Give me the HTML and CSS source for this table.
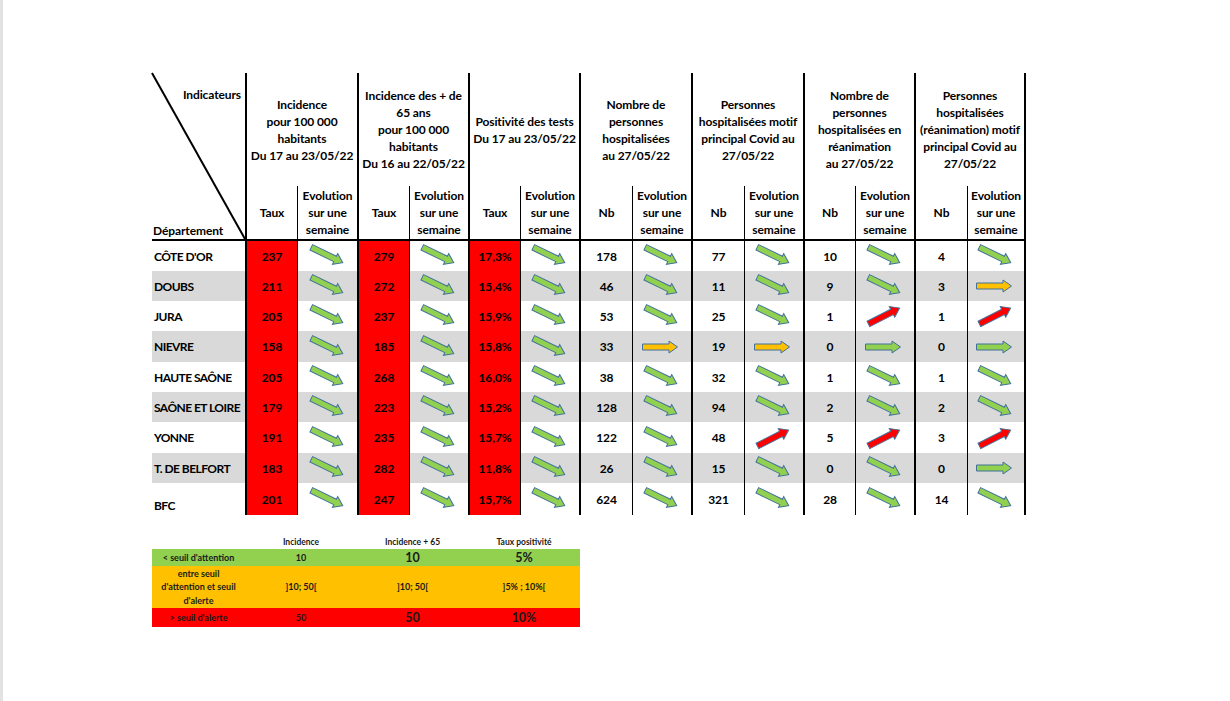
FILE: index.html
```html
<!DOCTYPE html>
<html lang="fr">
<head>
<meta charset="utf-8">
<title>Indicateurs COVID BFC</title>
<link rel="stylesheet" href="styles.css">
</head>
<body>
<svg class="defs" width="0" height="0" aria-hidden="true">
  <defs>
    <polygon id="ar" points="-17.5,-3 9,-3 9,-6 17.5,0 9,6 9,3 -17.5,3"/>
  </defs>
</svg>
<main class="page">
  <div class="grid">
    <div class="c hd dept">
      <svg class="diag" viewBox="0 0 93 166" preserveAspectRatio="none"><line x1="0" y1="0" x2="93" y2="166"/></svg>
      <span class="ind">Indicateurs</span>
      <span class="dep">Département</span>
    </div>
    <div class="c hd gt">Incidence<br>pour 100 000<br>habitants<br>Du 17 au 23/05/22</div>
    <div class="c hd gt">Incidence des + de<br>65 ans<br>pour 100 000<br>habitants<br>Du 16 au 22/05/22</div>
    <div class="c hd gt">Positivité des tests<br>Du 17 au 23/05/22</div>
    <div class="c hd gt">Nombre de<br>personnes<br>hospitalisées<br>au 27/05/22</div>
    <div class="c hd gt">Personnes<br>hospitalisées motif<br>principal Covid au<br>27/05/22</div>
    <div class="c hd gt">Nombre de<br>personnes<br>hospitalisées en<br>réanimation<br>au 27/05/22</div>
    <div class="c hd gt last">Personnes<br>hospitalisées<br>(réanimation) motif<br>principal Covid au<br>27/05/22</div>

    <div class="c sh k">Taux</div><div class="c sh e">Evolution<br>sur une<br>semaine</div>
    <div class="c sh k">Taux</div><div class="c sh e">Evolution<br>sur une<br>semaine</div>
    <div class="c sh k">Taux</div><div class="c sh e">Evolution<br>sur une<br>semaine</div>
    <div class="c sh k">Nb</div><div class="c sh e">Evolution<br>sur une<br>semaine</div>
    <div class="c sh k">Nb</div><div class="c sh e">Evolution<br>sur une<br>semaine</div>
    <div class="c sh k">Nb</div><div class="c sh e">Evolution<br>sur une<br>semaine</div>
    <div class="c sh k">Nb</div><div class="c sh e last">Evolution<br>sur une<br>semaine</div>

    <div class="row">
      <div class="c nm">CÔTE D'OR</div>
      <div class="c k red">237</div><div class="c e"><svg class="arr"><use href="#ar" class="dn"/></svg></div>
      <div class="c k red">279</div><div class="c e"><svg class="arr"><use href="#ar" class="dn"/></svg></div>
      <div class="c k red">17,3%</div><div class="c e"><svg class="arr"><use href="#ar" class="dn"/></svg></div>
      <div class="c k">178</div><div class="c e"><svg class="arr"><use href="#ar" class="dn"/></svg></div>
      <div class="c k">77</div><div class="c e"><svg class="arr"><use href="#ar" class="dn"/></svg></div>
      <div class="c k">10</div><div class="c e"><svg class="arr"><use href="#ar" class="dn"/></svg></div>
      <div class="c k">4</div><div class="c e last"><svg class="arr"><use href="#ar" class="dn"/></svg></div>
    </div>
    <div class="row gray">
      <div class="c nm">DOUBS</div>
      <div class="c k red">211</div><div class="c e"><svg class="arr"><use href="#ar" class="dn"/></svg></div>
      <div class="c k red">272</div><div class="c e"><svg class="arr"><use href="#ar" class="dn"/></svg></div>
      <div class="c k red">15,4%</div><div class="c e"><svg class="arr"><use href="#ar" class="dn"/></svg></div>
      <div class="c k">46</div><div class="c e"><svg class="arr"><use href="#ar" class="dn"/></svg></div>
      <div class="c k">11</div><div class="c e"><svg class="arr"><use href="#ar" class="dn"/></svg></div>
      <div class="c k">9</div><div class="c e"><svg class="arr"><use href="#ar" class="dn"/></svg></div>
      <div class="c k">3</div><div class="c e last"><svg class="arr"><use href="#ar" class="fy"/></svg></div>
    </div>
    <div class="row">
      <div class="c nm">JURA</div>
      <div class="c k red">205</div><div class="c e"><svg class="arr"><use href="#ar" class="dn"/></svg></div>
      <div class="c k red">237</div><div class="c e"><svg class="arr"><use href="#ar" class="dn"/></svg></div>
      <div class="c k red">15,9%</div><div class="c e"><svg class="arr"><use href="#ar" class="dn"/></svg></div>
      <div class="c k">53</div><div class="c e"><svg class="arr"><use href="#ar" class="dn"/></svg></div>
      <div class="c k">25</div><div class="c e"><svg class="arr"><use href="#ar" class="dn"/></svg></div>
      <div class="c k">1</div><div class="c e"><svg class="arr"><use href="#ar" class="up"/></svg></div>
      <div class="c k">1</div><div class="c e last"><svg class="arr"><use href="#ar" class="up"/></svg></div>
    </div>
    <div class="row gray">
      <div class="c nm">NIEVRE</div>
      <div class="c k red">158</div><div class="c e"><svg class="arr"><use href="#ar" class="dn"/></svg></div>
      <div class="c k red">185</div><div class="c e"><svg class="arr"><use href="#ar" class="dn"/></svg></div>
      <div class="c k red">15,8%</div><div class="c e"><svg class="arr"><use href="#ar" class="dn"/></svg></div>
      <div class="c k">33</div><div class="c e"><svg class="arr"><use href="#ar" class="fy"/></svg></div>
      <div class="c k">19</div><div class="c e"><svg class="arr"><use href="#ar" class="fy"/></svg></div>
      <div class="c k">0</div><div class="c e"><svg class="arr"><use href="#ar" class="fg"/></svg></div>
      <div class="c k">0</div><div class="c e last"><svg class="arr"><use href="#ar" class="fg"/></svg></div>
    </div>
    <div class="row">
      <div class="c nm">HAUTE SAÔNE</div>
      <div class="c k red">205</div><div class="c e"><svg class="arr"><use href="#ar" class="dn"/></svg></div>
      <div class="c k red">268</div><div class="c e"><svg class="arr"><use href="#ar" class="dn"/></svg></div>
      <div class="c k red">16,0%</div><div class="c e"><svg class="arr"><use href="#ar" class="dn"/></svg></div>
      <div class="c k">38</div><div class="c e"><svg class="arr"><use href="#ar" class="dn"/></svg></div>
      <div class="c k">32</div><div class="c e"><svg class="arr"><use href="#ar" class="dn"/></svg></div>
      <div class="c k">1</div><div class="c e"><svg class="arr"><use href="#ar" class="dn"/></svg></div>
      <div class="c k">1</div><div class="c e last"><svg class="arr"><use href="#ar" class="dn"/></svg></div>
    </div>
    <div class="row gray">
      <div class="c nm">SAÔNE ET LOIRE</div>
      <div class="c k red">179</div><div class="c e"><svg class="arr"><use href="#ar" class="dn"/></svg></div>
      <div class="c k red">223</div><div class="c e"><svg class="arr"><use href="#ar" class="dn"/></svg></div>
      <div class="c k red">15,2%</div><div class="c e"><svg class="arr"><use href="#ar" class="dn"/></svg></div>
      <div class="c k">128</div><div class="c e"><svg class="arr"><use href="#ar" class="dn"/></svg></div>
      <div class="c k">94</div><div class="c e"><svg class="arr"><use href="#ar" class="dn"/></svg></div>
      <div class="c k">2</div><div class="c e"><svg class="arr"><use href="#ar" class="dn"/></svg></div>
      <div class="c k">2</div><div class="c e last"><svg class="arr"><use href="#ar" class="dn"/></svg></div>
    </div>
    <div class="row">
      <div class="c nm">YONNE</div>
      <div class="c k red">191</div><div class="c e"><svg class="arr"><use href="#ar" class="dn"/></svg></div>
      <div class="c k red">235</div><div class="c e"><svg class="arr"><use href="#ar" class="dn"/></svg></div>
      <div class="c k red">15,7%</div><div class="c e"><svg class="arr"><use href="#ar" class="dn"/></svg></div>
      <div class="c k">122</div><div class="c e"><svg class="arr"><use href="#ar" class="dn"/></svg></div>
      <div class="c k">48</div><div class="c e"><svg class="arr"><use href="#ar" class="up"/></svg></div>
      <div class="c k">5</div><div class="c e"><svg class="arr"><use href="#ar" class="up"/></svg></div>
      <div class="c k">3</div><div class="c e last"><svg class="arr"><use href="#ar" class="up"/></svg></div>
    </div>
    <div class="row gray">
      <div class="c nm">T. DE BELFORT</div>
      <div class="c k red">183</div><div class="c e"><svg class="arr"><use href="#ar" class="dn"/></svg></div>
      <div class="c k red">282</div><div class="c e"><svg class="arr"><use href="#ar" class="dn"/></svg></div>
      <div class="c k red">11,8%</div><div class="c e"><svg class="arr"><use href="#ar" class="dn"/></svg></div>
      <div class="c k">26</div><div class="c e"><svg class="arr"><use href="#ar" class="dn"/></svg></div>
      <div class="c k">15</div><div class="c e"><svg class="arr"><use href="#ar" class="dn"/></svg></div>
      <div class="c k">0</div><div class="c e"><svg class="arr"><use href="#ar" class="dn"/></svg></div>
      <div class="c k">0</div><div class="c e last"><svg class="arr"><use href="#ar" class="fg"/></svg></div>
    </div>
    <div class="row total">
      <div class="c nm">BFC</div>
      <div class="c k red">201</div><div class="c e"><svg class="arr"><use href="#ar" class="dn"/></svg></div>
      <div class="c k red">247</div><div class="c e"><svg class="arr"><use href="#ar" class="dn"/></svg></div>
      <div class="c k red">15,7%</div><div class="c e"><svg class="arr"><use href="#ar" class="dn"/></svg></div>
      <div class="c k">624</div><div class="c e"><svg class="arr"><use href="#ar" class="dn"/></svg></div>
      <div class="c k">321</div><div class="c e"><svg class="arr"><use href="#ar" class="dn"/></svg></div>
      <div class="c k">28</div><div class="c e"><svg class="arr"><use href="#ar" class="dn"/></svg></div>
      <div class="c k">14</div><div class="c e last"><svg class="arr"><use href="#ar" class="dn"/></svg></div>
    </div>
  </div>

  <div class="legend">
    <div class="lh"></div>
    <div class="lh">Incidence</div>
    <div class="lh">Incidence + 65</div>
    <div class="lh">Taux positivité</div>

    <div class="lrow lgreen">
      <div class="lc">&lt; seuil d'attention</div>
      <div class="lc">10</div>
      <div class="lc big">10</div>
      <div class="lc big">5%</div>
    </div>
    <div class="lrow lyellow">
      <div class="lc">entre seuil<br>d'attention et seuil<br>d'alerte</div>
      <div class="lc">]10; 50[</div>
      <div class="lc">]10; 50[</div>
      <div class="lc">]5% ; 10%[</div>
    </div>
    <div class="lrow lred">
      <div class="lc">&gt; seuil d'alerte</div>
      <div class="lc">50</div>
      <div class="lc big">50</div>
      <div class="lc big">10%</div>
    </div>
  </div>
</main>
</body>
</html>
```

FILE: styles.css
```css
* { box-sizing: border-box; }

html, body {
  margin: 0;
  padding: 0;
  background: #fff;
}

body {
  border-left: 3px solid #e2e2e2;
  min-height: 701px;
  font-family: "Lato", "Liberation Sans", sans-serif;
  font-weight: 700;
  color: #000;
}

.defs {
  position: absolute;
  width: 0;
  height: 0;
}

.page {
  padding: 73px 0 0 149px;
}

.grid {
  display: grid;
  width: 876px;
  grid-template-columns: 93px 52px 60px 52px 59px 52px 59px 53px 59px 53px 59px 52px 59px 53px 59px;
  grid-template-rows: 113px 55px 30px 30px 30px 31px 30px 30px 31px 30px 32px;
  font-size: 12px;
  letter-spacing: -0.1px;
}

.row { display: contents; }

.c {
  display: flex;
  align-items: center;
  justify-content: center;
  text-align: center;
  white-space: nowrap;
  line-height: 17px;
}

.hd.dept {
  grid-row: 1 / span 2;
  grid-column: 1;
  position: relative;
  border-bottom: 2px solid #000;
  display: block;
}

.diag {
  position: absolute;
  left: 0;
  top: 0;
  width: 100%;
  height: 100%;
  overflow: visible;
}
.diag line {
  stroke: #000;
  stroke-width: 2;
  vector-effect: non-scaling-stroke;
}

.ind {
  position: absolute;
  right: 4px;
  top: 13px;
}
.dep {
  position: absolute;
  left: 1px;
  bottom: 0;
}

.gt {
  grid-column: span 2;
  border-left: 2px solid #000;
}

.sh {
  border-bottom: 2px solid #000;
}

.k { border-left: 2px solid #000; }
.e { border-left: 1px solid #000; }
.last { border-right: 2px solid #000; }

.nm {
  justify-content: flex-start;
  padding-left: 2px;
  letter-spacing: -0.55px;
}

.gray > .c { background: #d9d9d9; }
.row > .red { background: #ff0000; }

.total > .nm {
  align-items: flex-end;
  padding-bottom: 1px;
}

.arr {
  width: 60px;
  height: 30px;
  overflow: visible;
}
.arr use {
  stroke: #41719c;
  stroke-width: 1;
  stroke-linejoin: miter;
}
.arr .dn { fill: #92d050; transform: translate(29px, 14px) rotate(26deg); }
.arr .up { fill: #ff0000; transform: translate(29px, 15px) rotate(-27deg); }
.arr .fy { fill: #ffc000; transform: translate(28px, 15px); }
.arr .fg { fill: #92d050; transform: translate(28px, 15px); }

/* legend */
.legend {
  margin-top: 20px;
  display: grid;
  width: 428px;
  grid-template-columns: 93px 112px 111px 112px;
  grid-template-rows: 14px 17px 42px 19px;
  font-size: 8.5px;
  color: #1a1a1a;
}

.lrow { display: contents; }

.lh, .lc {
  display: flex;
  align-items: center;
  justify-content: center;
  text-align: center;
  white-space: nowrap;
}

.lc { font-size: 9px; line-height: 13.5px; }
.lc.big { font-size: 12.5px; }

.lgreen > .lc { background: #92d050; }
.lyellow > .lc { background: #ffc000; }
.lred > .lc { background: #ff0000; }
```
